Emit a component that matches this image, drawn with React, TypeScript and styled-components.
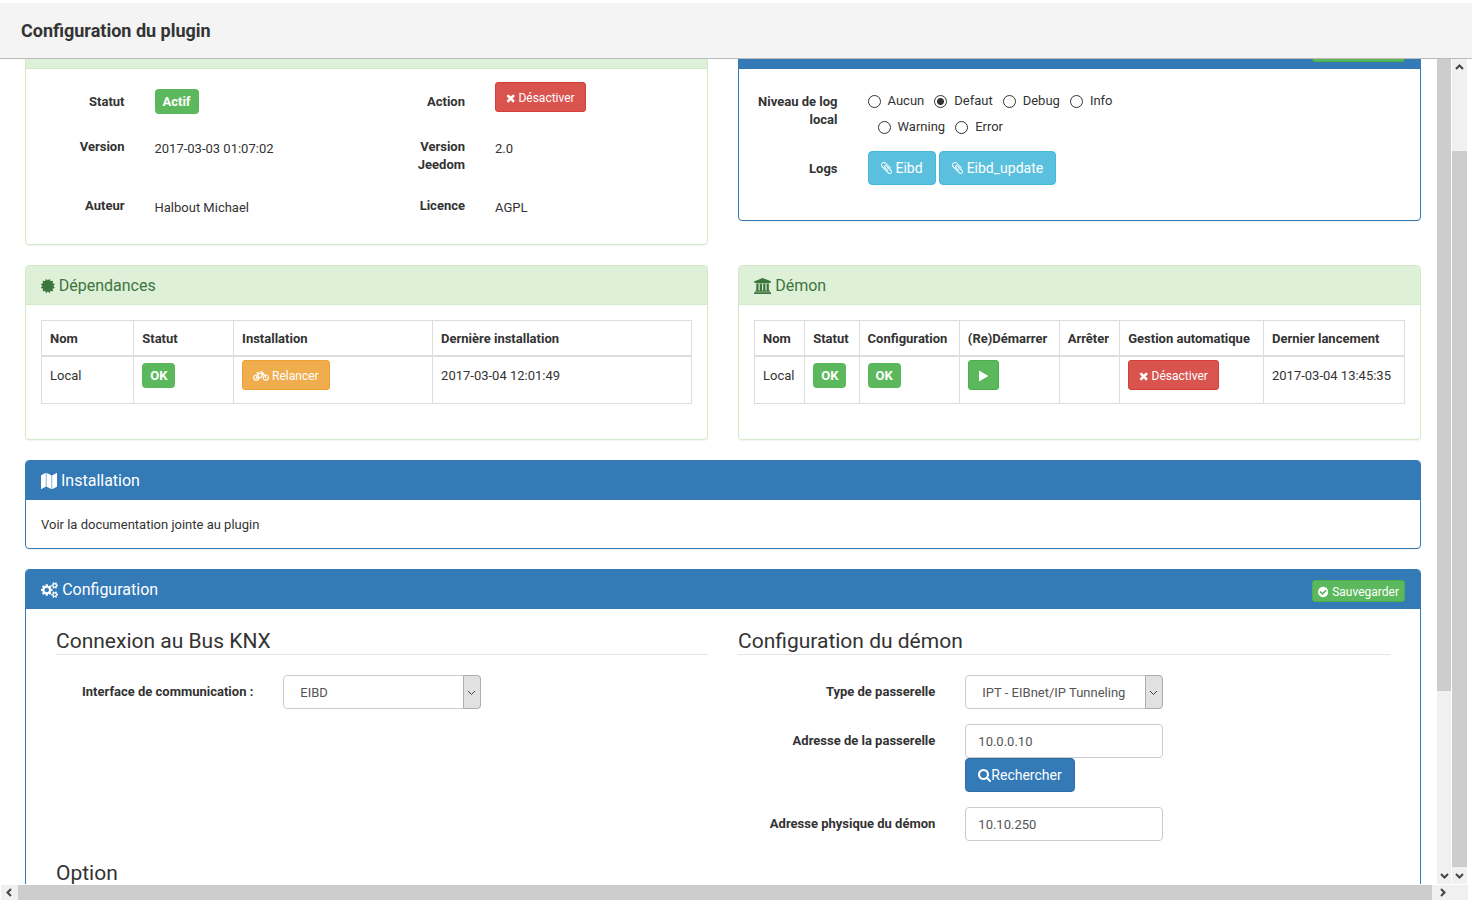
import React, { useLayoutEffect, useRef } from "react";
import styled, { createGlobalStyle, css } from "styled-components";
import { FaBicycle, FaCircleNotch, FaRegFileAlt } from "react-icons/fa";

const GlobalStyle = createGlobalStyle`
  *, *::before, *::after { box-sizing: border-box; }
  body {
    margin: 0;
    background: #fff;
    color: #333;
    font: 13px/18px Roboto, "Liberation Sans", sans-serif;
  }
  button, input, select { font-family: inherit; margin: 0; }
`;

/* ---------- icons ---------- */

const icons = {
  times: [
    1408,
    "M1298 1322q0 40-28 68l-136 136q-28 28-68 28t-68-28l-294-294-294 294q-28 28-68 28t-68-28l-136-136q-28-28-28-68t28-68l294-294-294-294q-28-28-28-68t28-68l136-136q28-28 68-28t68 28l294 294 294-294q28-28 68-28t68 28l136 136q28 28 28 68t-28 68l-294 294 294 294q28 28 28 68z",
  ],
  play: [
    1408,
    "M1384 927l-1328 738q-23 13-39.5 3t-16.5-36v-1472q0-26 16.5-36t39.5 3l1328 738q23 13 23 31t-23 31z",
  ],
  search: [
    1664,
    "M1152 832q0-185-131.5-316.5t-316.5-131.5-316.5 131.5-131.5 316.5 131.5 316.5 316.5 131.5 316.5-131.5 131.5-316.5zm512 832q0 52-38 90t-90 38q-54 0-90-38l-343-342q-179 124-399 124-143 0-273.5-55.5t-225-150-150-225-55.5-273.5 55.5-273.5 150-225 225-150 273.5-55.5 273.5 55.5 225 150 150 225 55.5 273.5q0 220-124 399l343 343q37 37 37 90z",
  ],
  check: [
    1536,
    "M1284 734q0-28-18-46l-91-90q-19-19-45-19t-45 19l-408 407-226-226q-19-19-45-19t-45 19l-91 90q-18 18-18 46 0 27 18 45l362 362q19 19 45 19 27 0 46-19l543-543q18-18 18-45zm252 162q0 209-103 385.5t-279.5 279.5-385.5 103-385.5-103-279.5-279.5-103-385.5 103-385.5 279.5-279.5 385.5-103 385.5 103 279.5 279.5 103 385.5z",
  ],
  university: [
    1920,
    "M960 0l960 384v128h-128q0 26-20.5 45t-48.5 19h-1526q-28 0-48.5-19t-20.5-45h-128v-128zm-704 640h256v768h128v-768h256v768h128v-768h256v768h128v-768h256v768h59q28 0 48.5 19t20.5 45v64h-1664v-64q0-26 20.5-45t48.5-19h59v-768zm1595 960q28 0 48.5 19t20.5 45v128h-1920v-128q0-26 20.5-45t48.5-19h1782z",
  ],
  certificate: [
    1536,
    "M1376 896l138 135q30 28 20 70-12 41-52 51l-188 48 53 186q12 41-19 70-29 31-70 19l-186-53-48 188q-10 40-51 52-12 2-19 2-31 0-51-22l-135-138-135 138q-28 30-70 20-41-11-51-52l-48-188-186 53q-41 12-70-19-31-29-19-70l53-186-188-48q-40-10-52-51-10-42 20-70l138-135-138-135q-30-28-20-70 12-41 52-51l188-48-53-186q-12-41 19-70 29-31 70-19l186 53 48-188q10-41 51-51 41-12 70 19l135 139 135-139q29-30 70-19 41 10 51 51l48 188 186-53q41-12 70 19 31 29 19 70l-53 186 188 48q40 10 52 51 10 42-20 70z",
  ],
  map: [
    1792,
    "M512 0q13 0 22.5 9.5t9.5 22.5v1472q0 20-17 28l-480 256q-7 4-15 4-13 0-22.5-9.5t-9.5-22.5v-1472q0-20 17-28l480-256q7-4 15-4zm1248 0q13 0 22.5 9.5t9.5 22.5v1472q0 20-17 28l-480 256q-7 4-15 4-13 0-22.5-9.5t-9.5-22.5v-1472q0-20 17-28l480-256q7-4 15-4zm-1120 0q8 0 14 3l512 256q18 10 18 29v1472q0 13-9.5 22.5t-22.5 9.5q-8 0-14-3l-512-256q-18-10-18-29v-1472q0-13 9.5-22.5t22.5-9.5z",
  ],
  paperclip: [
    1408,
    "M1404 1385q0 117-79 196t-196 79q-135 0-235-100l-777-776q-113-115-113-271 0-159 110-270t269-111q158 0 273 113l605 606q10 10 10 22 0 16-30.5 46.5t-46.5 30.5q-13 0-23-10l-606-607q-79-77-181-77-106 0-179 75t-73 181q0 105 76 181l776 777q63 63 145 63 64 0 106-42t42-106q0-82-63-145l-581-581q-26-24-60-24-29 0-48 19t-19 48q0 32 25 59l410 410q10 10 10 22 0 16-31 47t-47 31q-12 0-22-10l-410-410q-63-61-63-149 0-82 57-139t139-57q88 0 149 63l581 581q100 98 100 235z",
  ],
  cogs: [
    1920,
    "M896 896q0-106-75-181t-181-75-181 75-75 181 75 181 181 75 181-75 75-181zm768 512q0-52-38-90t-90-38-90 38-38 90q0 53 37.5 90.5t90.5 37.5 90.5-37.5 37.5-90.5zm0-1024q0-52-38-90t-90-38-90 38-38 90q0 53 37.5 90.5t90.5 37.5 90.5-37.5 37.5-90.5zm-384 421v185q0 10-7 19.5t-16 10.5l-155 24q-11 35-32 76 34 48 90 115 7 11 7 20 0 12-7 19-23 30-82.5 89.5t-78.5 59.5q-11 0-21-7l-115-90q-37 19-77 31-11 108-23 155-7 24-30 24h-186q-11 0-20-7.5t-10-17.5l-23-153q-34-10-75-31l-118 89q-7 7-20 7-11 0-21-8-144-133-144-160 0-9 7-19 10-14 41-53t47-61q-23-44-35-82l-152-24q-10-1-17-9.5t-7-19.5v-185q0-10 7-19.5t16-10.5l155-24q11-35 32-76-34-48-90-115-7-11-7-20 0-12 7-20 22-30 82-89t79-59q11 0 21 7l115 90q34-18 77-32 11-108 23-154 7-24 30-24h186q11 0 20 7.5t10 17.5l23 153q34 10 75 31l118-89q8-7 20-7 11 0 21 8 144 133 144 160 0 8-7 19-12 16-42 54t-45 60q23 48 34 82l152 23q10 2 17 10.5t7 19.5zm640 533v140q0 16-149 31-12 27-30 52 51 113 51 138 0 4-4 7-122 71-124 71-8 0-46-47t-52-68q-20 2-30 2t-30-2q-14 21-52 68t-46 47q-2 0-124-71-4-3-4-7 0-25 51-138-18-25-30-52-149-15-149-31v-140q0-16 149-31 13-29 30-52-51-113-51-138 0-4 4-7 4-2 35-20t59-34 30-16q8 0 46 46.5t52 67.5q20-2 30-2t30 2q51-71 92-112l6-2q4 0 124 70 4 3 4 7 0 25-51 138 17 23 30 52 149 15 149 31zm0-1024v140q0 16-149 31-12 27-30 52 51 113 51 138 0 4-4 7-122 71-124 71-8 0-46-47t-52-68q-20 2-30 2t-30-2q-14 21-52 68t-46 47q-2 0-124-71-4-3-4-7 0-25 51-138-18-25-30-52-149-15-149-31v-140q0-16 149-31 13-29 30-52-51-113-51-138 0-4 4-7 4-2 35-20t59-34 30-16q8 0 46 46.5t52 67.5q20-2 30-2t30 2q51-71 92-112l6-2q4 0 124 70 4 3 4 7 0 25-51 138 17 23 30 52 149 15 149 31z",
  ],
} as const;

const Glyph = styled.svg`
  height: 1em;
  flex: none;
  fill: currentColor;
`;

function Icon({ name }: { name: keyof typeof icons }) {
  const [width, path] = icons[name];
  return (
    <Glyph viewBox={`0 0 ${width} 1792`} aria-hidden="true">
      <path d={path} />
    </Glyph>
  );
}

const chevrons = {
  up: "M1 6l3.500-3.500L8 6",
  down: "M1 3l3.500 3.500L8 3",
  left: "M6 1L2.500 4.500L6 8",
  right: "M3 1l3.500 3.500L3 8",
};

const ChevronSvg = styled.svg<{ $thin?: boolean }>`
  width: 9px;
  height: 9px;
  fill: none;
  stroke: #444;
  stroke-width: ${(p) => (p.$thin ? 1 : 2)};
`;

function Chevron({ to, thin }: { to: keyof typeof chevrons; thin?: boolean }) {
  return (
    <ChevronSvg viewBox="0 0 9 9" $thin={thin} aria-hidden="true">
      <path d={chevrons[to]} />
    </ChevronSvg>
  );
}

/* ---------- dialog frame ---------- */

const Dialog = styled.main`
  display: flex;
  flex-direction: column;
  height: 100vh;
  padding: 3px 0 6px;
`;

const TitleBar = styled.header`
  flex: none;
  display: flex;
  align-items: center;
  height: 56px;
  padding: 0 21px;
  background: #f4f4f4;
  border-bottom: 1px solid #bbb;
`;

const Title = styled.h1`
  margin: 0;
  font-size: 18px;
  line-height: 24px;
  font-weight: 700;
`;

const Viewport = styled.div`
  flex: 1;
  min-height: 0;
  display: grid;
  grid-template-columns: minmax(0, 1fr) 15px 16px;
  grid-template-rows: minmax(0, 1fr) 17px;
  padding-right: 4px;
`;

const Content = styled.div`
  overflow: hidden;
  padding: 20px 16px 0 25px;
`;

const VerticalBar = styled.div`
  display: flex;
  flex-direction: column;
  background: #f0f0f0;
  border-right: 1px solid #fff;
`;

const HorizontalBar = styled.div`
  grid-column: 1 / -1;
  display: grid;
  grid-template-columns: 17px minmax(0, 1fr) 20px 16px;
  padding: 1px 0 1px 1px;
`;

const BarButton = styled.button`
  flex: none;
  display: flex;
  align-items: center;
  justify-content: center;
  min-height: 15px;
  padding: 0;
  border: 0;
  background: #f0f0f0;
  ${VerticalBar} & {
    height: 17px;
  }
`;

const BarPart = styled.div<{ $size: number; $thumb?: boolean }>`
  flex: ${(p) => p.$size} 1 0;
  background: ${(p) => (p.$thumb ? "#cdcdcd" : "transparent")};
`;

const BarCorner = styled.div`
  background: #f0f0f0;
`;

/* ---------- panels ---------- */

const tones = {
  success: { line: "#d6e9c6", back: "#dff0d8", ink: "#3c763d" },
  primary: { line: "#337ab7", back: "#337ab7", ink: "#fff" },
};

const TwoColumns = styled.div`
  display: grid;
  grid-template-columns: repeat(2, minmax(0, 1fr));
  column-gap: 30px;
  align-items: start;
`;

const PanelBox = styled.section<{ $tone: keyof typeof tones }>`
  margin-bottom: 20px;
  border: 1px solid ${(p) => tones[p.$tone].line};
  border-radius: 4px;
  box-shadow: 0 1px 1px rgba(0, 0, 0, 0.05);
  overflow: hidden;
`;

const PanelHeading = styled.div<{ $tone: keyof typeof tones }>`
  display: flex;
  align-items: flex-start;
  justify-content: space-between;
  min-height: 39px;
  padding: 10px 15px 6px;
  color: ${(p) => tones[p.$tone].ink};
  background: ${(p) => tones[p.$tone].back};
  border-bottom: 1px solid ${(p) => tones[p.$tone].line};
`;

const PanelTitle = styled.h2`
  display: flex;
  align-items: center;
  gap: 4px;
  margin: 0;
  font-size: 16px;
  line-height: 20px;
  font-weight: 400;
`;

const PanelBody = styled.div`
  padding: 15px;
`;

const PanelText = styled.p`
  margin: 0;
  padding: 16px 15px 14px;
`;

interface PanelProps {
  tone: keyof typeof tones;
  icon: React.ReactNode;
  title: string;
  saveable?: boolean;
  children: React.ReactNode;
}

function Panel({ tone, icon, title, saveable, children }: PanelProps) {
  return (
    <PanelBox $tone={tone}>
      <PanelHeading $tone={tone}>
        <PanelTitle>
          {icon}
          {title}
        </PanelTitle>
        {saveable && (
          <Button type="button" $tone="green" $size="tiny">
            <Icon name="check" />
            Sauvegarder
          </Button>
        )}
      </PanelHeading>
      {children}
    </PanelBox>
  );
}

/* ---------- controls ---------- */

const buttonTones = {
  green: ["#5cb85c", "#4cae4c"],
  red: ["#d9534f", "#d43f3a"],
  orange: ["#f0ad4e", "#eea236"],
  sky: ["#5bc0de", "#46b8da"],
  blue: ["#337ab7", "#2e6da4"],
};

const buttonSizes = {
  tiny: css`
    padding: 2px 5px 0;
    font-size: 12px;
    line-height: 18px;
    border-radius: 3px;
    gap: 4px;
  `,
  small: css`
    padding: 6px 10px 4px;
    font-size: 12px;
    line-height: 18px;
    border-radius: 3px;
    gap: 3px;
  `,
  normal: css`
    padding: 6px 12px;
    font-size: 14px;
    line-height: 20px;
    border-radius: 4px;
    gap: 4px;
  `,
};

const Button = styled.button<{
  $tone: keyof typeof buttonTones;
  $size: keyof typeof buttonSizes;
  $joined?: boolean;
}>`
  display: inline-flex;
  align-items: center;
  color: #fff;
  white-space: nowrap;
  cursor: pointer;
  background: ${(p) => buttonTones[p.$tone][0]};
  border: 1px solid ${(p) => buttonTones[p.$tone][1]};
  ${(p) => buttonSizes[p.$size]}
  ${(p) => p.$joined && "gap: 0;"}
`;

const PlayButton = styled(Button)`
  height: 30px;
`;

const Badge = styled.span`
  display: inline-block;
  padding: 4px 8px 3px;
  color: #fff;
  font-weight: 700;
  background: #5cb85c;
  border-radius: 4px;
`;

const fieldBox = css`
  width: 100%;
  height: 34px;
  color: #555;
  font-size: 13px;
  line-height: 20px;
  background: #fff;
  border: 1px solid #ccc;
  border-radius: 4px;
`;

const TextInput = styled.input`
  ${fieldBox}
  display: block;
  padding: 6px 12px;
`;

const SelectWrap = styled.div`
  position: relative;
`;

const SelectBox = styled.select`
  ${fieldBox}
  display: block;
  padding: 7px 18px 5px 16px;
  appearance: none;
`;

const SelectArrow = styled.span`
  position: absolute;
  top: 0;
  right: 0;
  bottom: 0;
  width: 18px;
  display: flex;
  align-items: center;
  justify-content: center;
  pointer-events: none;
  background: #e1e1e1;
  border: 1px solid #adadad;
  border-radius: 0 4px 4px 0;
`;

function Select({ id, value }: { id: string; value: string }) {
  return (
    <SelectWrap>
      <SelectBox id={id} defaultValue={value}>
        <option>{value}</option>
      </SelectBox>
      <SelectArrow>
        <Chevron to="down" thin />
      </SelectArrow>
    </SelectWrap>
  );
}

const RadioLabel = styled.label`
  display: inline-flex;
  align-items: center;
  gap: 7px;
  height: 26px;
  margin-left: 10px;
  &:first-child {
    margin-left: 0;
  }
`;

const Radio = styled.input`
  appearance: none;
  width: 13px;
  height: 13px;
  border: 1px solid #333;
  border-radius: 50%;
  background: #fff;
  &:checked {
    background: radial-gradient(circle, #333 3px, #fff 4px);
  }
`;

/* ---------- status and log panels ---------- */

const StatusGrid = styled.dl`
  display: grid;
  grid-template-columns: 2fr 4fr 2fr 4fr;
  grid-auto-rows: minmax(33px, auto);
  row-gap: 12px;
  margin: 0;
  padding: 13px 0 25px;
`;

const StatusName = styled.dt`
  padding: 11px 15px 0;
  text-align: right;
  font-weight: 700;
`;

const StatusValue = styled.dd<{ $top: number }>`
  margin: 0;
  padding: ${(p) => p.$top}px 15px 0;
`;

const LogGrid = styled.div`
  display: grid;
  grid-template-columns: 2fr 6fr 4fr;
  align-items: start;
  row-gap: 11px;
  padding: 15px 0 35px;
`;

const LogName = styled.div`
  grid-column: 1;
  padding: 9px 15px 0;
  text-align: right;
  font-weight: 700;
`;

const RadioGroup = styled.div`
  grid-column: 2;
  display: flex;
  flex-wrap: wrap;
  padding: 4px 15px 0;
`;

const LogButtons = styled.div`
  grid-column: 2;
  display: flex;
  gap: 3px;
  padding: 0 15px;
`;

/* ---------- tables ---------- */

const Table = styled.table`
  width: 100%;
  margin-bottom: 20px;
  border-collapse: collapse;
  th,
  td {
    border: 1px solid #ddd;
    text-align: left;
    vertical-align: top;
    white-space: nowrap;
  }
  th {
    padding: 9px 8px 7px;
    border-bottom-width: 2px;
    font-weight: 700;
  }
  td {
    padding: 3px 8px 13px;
  }
`;

const Cell = styled.div`
  display: flex;
  align-items: center;
  height: 30px;
`;

const TextCell = styled(Cell)`
  padding-top: 2px;
`;

/* ---------- configuration form ---------- */

const FormArea = styled.form`
  padding: 15px 30px;
`;

const Fieldset = styled.fieldset`
  min-width: 0;
  margin: 0 0 15px;
  padding: 0;
  border: 0;
`;

const Legend = styled.legend`
  display: block;
  width: 100%;
  margin-bottom: 20px;
  padding: 4px 0 0;
  font-size: 21px;
  line-height: 26px;
  border-bottom: 1px solid #e5e5e5;
`;

const Fields = styled.div`
  display: grid;
  grid-template-columns: repeat(3, minmax(0, 1fr));
  row-gap: 15px;
  margin: 0 -15px;
`;

const FieldLabel = styled.label`
  grid-column: 1;
  padding: 8px 15px 0;
  text-align: right;
  font-weight: 700;
`;

const FieldValue = styled.div`
  grid-column: 2;
  padding: 0 15px;
`;

const levels = ["Aucun", "Defaut", "Debug", "Info", "Warning", "Error"];

const SCROLLED = 50;

export default function App() {
  const content = useRef<HTMLDivElement>(null);

  useLayoutEffect(() => {
    if (content.current) content.current.scrollTop = SCROLLED;
  }, []);

  return (
    <>
      <GlobalStyle />
      <Dialog>
        <TitleBar>
          <Title>Configuration du plugin</Title>
        </TitleBar>
        <Viewport>
          <Content ref={content}>
            <TwoColumns>
              <Panel tone="success" icon={<FaCircleNotch size={14} />} title="Etat">
                <StatusGrid>
                  <StatusName>Statut</StatusName>
                  <StatusValue $top={7}>
                    <Badge>Actif</Badge>
                  </StatusValue>
                  <StatusName>Action</StatusName>
                  <StatusValue $top={0}>
                    <Button type="button" $tone="red" $size="small">
                      <Icon name="times" />
                      Désactiver
                    </Button>
                  </StatusValue>
                  <StatusName>Version</StatusName>
                  <StatusValue $top={13}>2017-03-03 01:07:02</StatusValue>
                  <StatusName>Version Jeedom</StatusName>
                  <StatusValue $top={13}>2.0</StatusValue>
                  <StatusName>Auteur</StatusName>
                  <StatusValue $top={13}>Halbout Michael</StatusValue>
                  <StatusName>Licence</StatusName>
                  <StatusValue $top={13}>AGPL</StatusValue>
                </StatusGrid>
              </Panel>
              <Panel tone="primary" icon={<FaRegFileAlt size={14} />} title="Logs" saveable>
                <LogGrid>
                  <LogName id="log-level">Niveau de log local</LogName>
                  <RadioGroup role="radiogroup" aria-labelledby="log-level">
                    {levels.map((level) => (
                      <RadioLabel key={level}>
                        <Radio type="radio" name="level" defaultChecked={level === "Defaut"} />
                        {level}
                      </RadioLabel>
                    ))}
                  </RadioGroup>
                  <LogName>Logs</LogName>
                  <LogButtons>
                    {["Eibd", "Eibd_update"].map((file) => (
                      <Button key={file} type="button" $tone="sky" $size="normal">
                        <Icon name="paperclip" />
                        {file}
                      </Button>
                    ))}
                  </LogButtons>
                </LogGrid>
              </Panel>
            </TwoColumns>

            <TwoColumns>
              <Panel tone="success" icon={<Icon name="certificate" />} title="Dépendances">
                <PanelBody>
                  <Table>
                    <thead>
                      <tr>
                        <th>Nom</th>
                        <th>Statut</th>
                        <th>Installation</th>
                        <th>Dernière installation</th>
                      </tr>
                    </thead>
                    <tbody>
                      <tr>
                        <td><TextCell>Local</TextCell></td>
                        <td><Cell><Badge>OK</Badge></Cell></td>
                        <td>
                          <Cell>
                            <Button type="button" $tone="orange" $size="small">
                              <FaBicycle size={16} />
                              Relancer
                            </Button>
                          </Cell>
                        </td>
                        <td><TextCell>2017-03-04 12:01:49</TextCell></td>
                      </tr>
                    </tbody>
                  </Table>
                </PanelBody>
              </Panel>
              <Panel tone="success" icon={<Icon name="university" />} title="Démon">
                <PanelBody>
                  <Table>
                    <thead>
                      <tr>
                        <th>Nom</th>
                        <th>Statut</th>
                        <th>Configuration</th>
                        <th>(Re)Démarrer</th>
                        <th>Arrêter</th>
                        <th>Gestion automatique</th>
                        <th>Dernier lancement</th>
                      </tr>
                    </thead>
                    <tbody>
                      <tr>
                        <td><TextCell>Local</TextCell></td>
                        <td><Cell><Badge>OK</Badge></Cell></td>
                        <td><Cell><Badge>OK</Badge></Cell></td>
                        <td>
                          <Cell>
                            <PlayButton type="button" $tone="green" $size="small" aria-label="Démarrer">
                              <Icon name="play" />
                            </PlayButton>
                          </Cell>
                        </td>
                        <td />
                        <td>
                          <Cell>
                            <Button type="button" $tone="red" $size="small">
                              <Icon name="times" />
                              Désactiver
                            </Button>
                          </Cell>
                        </td>
                        <td><TextCell>2017-03-04 13:45:35</TextCell></td>
                      </tr>
                    </tbody>
                  </Table>
                </PanelBody>
              </Panel>
            </TwoColumns>

            <Panel tone="primary" icon={<Icon name="map" />} title="Installation">
              <PanelText>Voir la documentation jointe au plugin</PanelText>
            </Panel>

            <Panel tone="primary" icon={<Icon name="cogs" />} title="Configuration" saveable>
              <FormArea>
                <TwoColumns>
                  <Fieldset>
                    <Legend>Connexion au Bus KNX</Legend>
                    <Fields>
                      <FieldLabel htmlFor="interface">Interface de communication :</FieldLabel>
                      <FieldValue>
                        <Select id="interface" value="EIBD" />
                      </FieldValue>
                    </Fields>
                  </Fieldset>
                  <Fieldset>
                    <Legend>Configuration du démon</Legend>
                    <Fields>
                      <FieldLabel htmlFor="gateway-type">Type de passerelle</FieldLabel>
                      <FieldValue>
                        <Select id="gateway-type" value="IPT - EIBnet/IP Tunneling" />
                      </FieldValue>
                      <FieldLabel htmlFor="gateway-address">Adresse de la passerelle</FieldLabel>
                      <FieldValue>
                        <TextInput id="gateway-address" defaultValue="10.0.0.10" />
                        <Button type="button" $tone="blue" $size="normal" $joined>
                          <Icon name="search" />
                          Rechercher
                        </Button>
                      </FieldValue>
                      <FieldLabel htmlFor="daemon-address">Adresse physique du démon</FieldLabel>
                      <FieldValue>
                        <TextInput id="daemon-address" defaultValue="10.10.250" />
                      </FieldValue>
                    </Fields>
                  </Fieldset>
                  <Fieldset>
                    <Legend>Option</Legend>
                  </Fieldset>
                </TwoColumns>
              </FormArea>
            </Panel>
          </Content>
          <VerticalBar>
            <BarPart $size={632} $thumb />
            <BarPart $size={176} />
            <BarButton type="button" aria-label="Défiler vers le bas">
              <Chevron to="down" />
            </BarButton>
          </VerticalBar>
          <VerticalBar>
            <BarButton type="button" aria-label="Vers le haut">
              <Chevron to="up" />
            </BarButton>
            <BarPart $size={75} />
            <BarPart $size={716} $thumb />
            <BarButton type="button" aria-label="Vers le bas">
              <Chevron to="down" />
            </BarButton>
          </VerticalBar>
          <HorizontalBar>
            <BarButton type="button" aria-label="Vers la gauche">
              <Chevron to="left" />
            </BarButton>
            <BarPart $size={1} $thumb />
            <BarButton type="button" aria-label="Vers la droite">
              <Chevron to="right" />
            </BarButton>
            <BarCorner />
          </HorizontalBar>
        </Viewport>
      </Dialog>
    </>
  );
}
